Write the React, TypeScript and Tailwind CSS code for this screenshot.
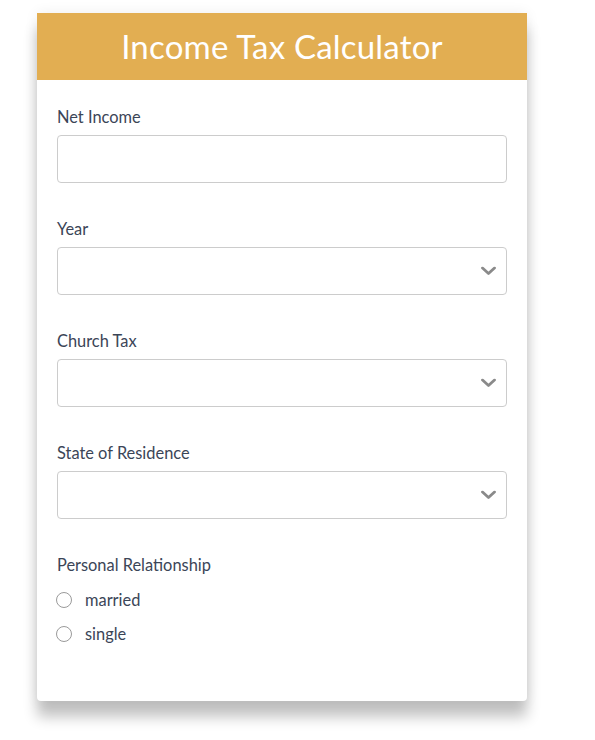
import React from "react";

const Chevron = () => (
  <svg width="15" height="9" viewBox="0 0 15 9" className="pointer-events-none absolute right-[10px] top-1/2 -translate-y-1/2">
    <path d="M1.5 1.5 L7.5 7 L13.5 1.5" fill="none" stroke="#8a8a8a" strokeWidth="2.8" strokeLinecap="round" strokeLinejoin="round" />
  </svg>
);

const Field = ({ label, select }: { label: string; select?: boolean }) => (
  <div className="mb-[34px]">
    <div className="text-[16.4px] leading-[24px] text-[#3b4557] mb-[6px]">{label}</div>
    <div className="relative h-[48px] w-full rounded-[4px] border border-[#cccccc] bg-white">
      {select && <Chevron />}
    </div>
  </div>
);

export default function App() {
  return (
    <div className="min-h-[740px] bg-white pt-[13px] pl-[37px]" style={{ fontFamily: "Lato, 'Noto Sans', sans-serif" }}>
      <div className="w-[490px] h-[688px] rounded-b-[4px] bg-white shadow-[0_16px_14px_rgba(0,0,0,0.24),0_0_14px_rgba(0,0,0,0.07)]">
        <div className="h-[67px] bg-[#e2ae52] flex items-center justify-center">
          <h1 className="text-[33px] text-white tracking-[0.2px] leading-none pb-[1px]">Income Tax Calculator</h1>
        </div>
        <div className="px-[20px] pt-[25px]">
          <Field label="Net Income" />
          <Field label="Year" select />
          <Field label="Church Tax" select />
          <Field label="State of Residence" select />
          <div className="text-[16.4px] leading-[24px] text-[#3b4557]">Personal Relationship</div>
          <div className="mt-[11px] flex flex-col gap-[10px]">
            {["married", "single"].map((t) => (
              <label key={t} className="flex items-center h-[24px] text-[16.4px] text-[#3b4557]">
                <span className="ml-[-1px] w-[16px] h-[16px] rounded-full border border-[#9a9a9a] bg-white" />
                <span className="ml-[13px]">{t}</span>
              </label>
            ))}
          </div>
        </div>
      </div>
    </div>
  );
}
